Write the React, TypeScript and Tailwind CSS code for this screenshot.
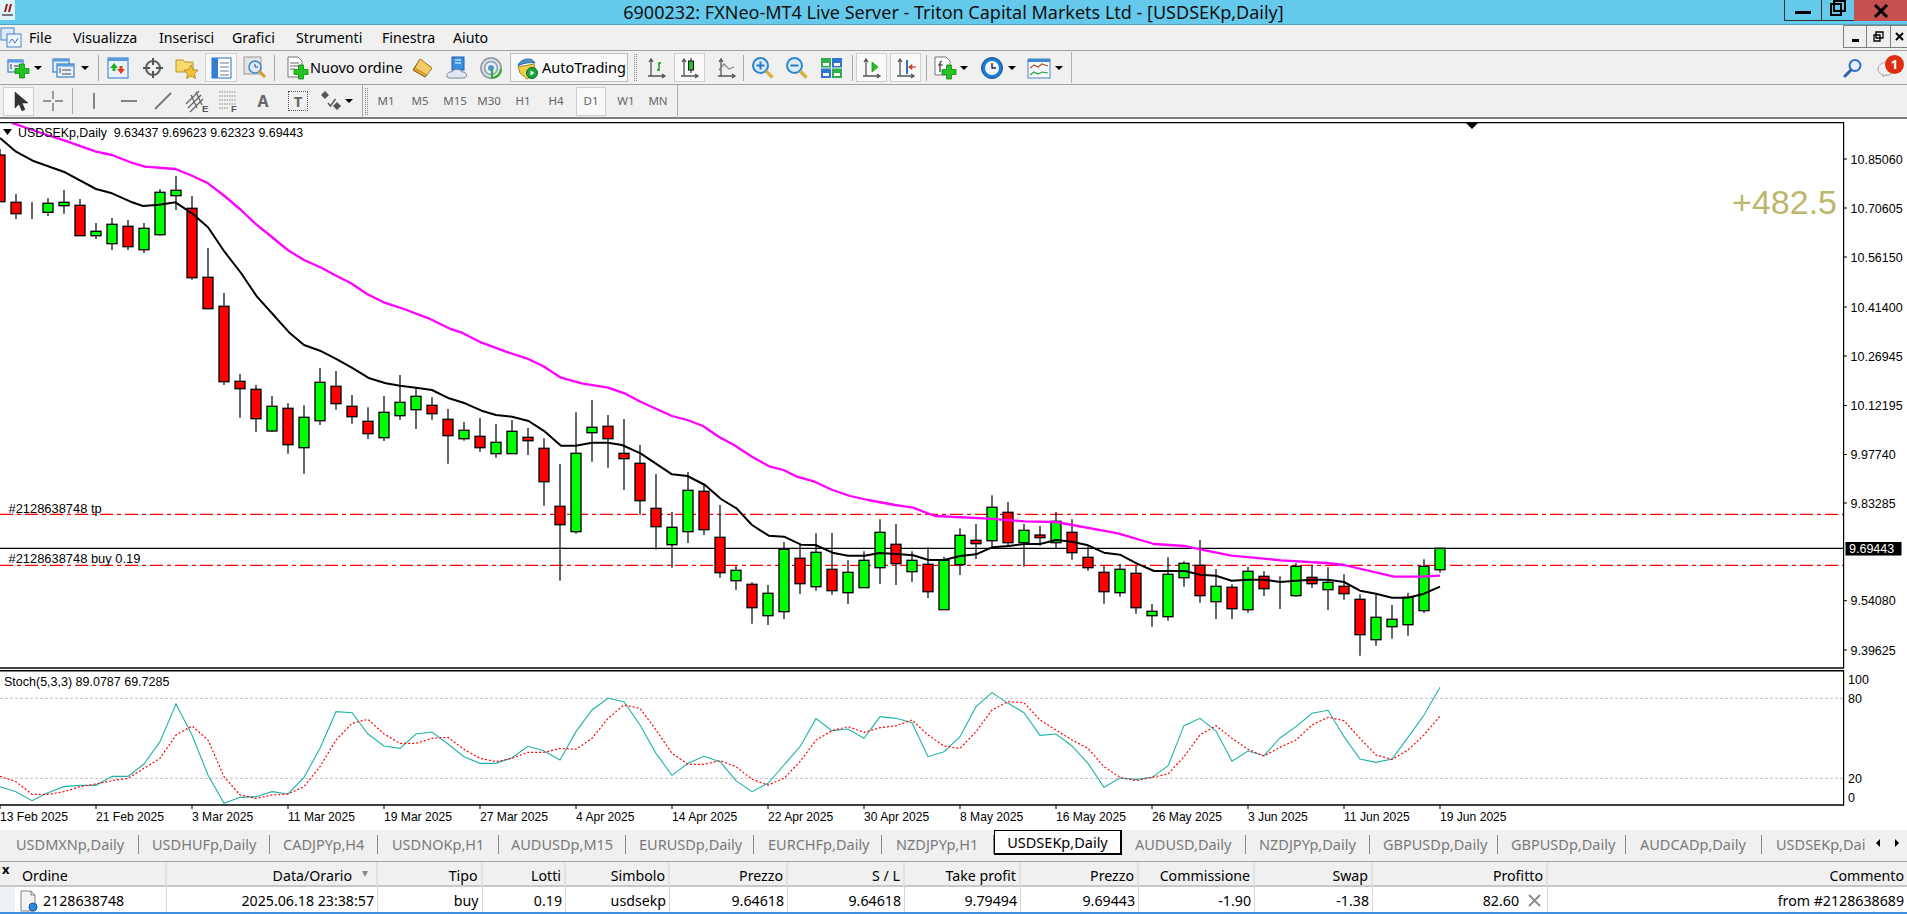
import React from "react";

type C = [number, number, number, number, number];
// top, bottom, high, low, green(1)/red(0)
const CANDLES: C[] = [
[155,201.7,149,202,0],[202.3,213.7,194,219,0],[213.3,213.3,202,219,1],[203.3,212.3,198.3,216,1],[202.3,205.7,190,213.7,1],
[205.3,235.7,199,235.7,0],[231.3,235.7,223,239,1],[224.3,243.7,218,250,1],[226.3,246.7,220,250,0],[228.3,249.7,223,253,1],
[192.3,234.7,189.3,235.7,1],[190.3,195.7,176,210,1],[208.3,277.7,196,279.7,0],[277.3,308.7,248,308.7,0],[306.3,381.7,293,385,0],
[381.3,388.7,374,417.7,0],[389.3,418.7,385,432,0],[406.3,431,396,432,1],[408.3,444.7,403.3,453.7,0],[417.3,447.7,405.3,473.7,1],
[382.3,420.7,368,425,1],[386.3,403.7,371,409.7,0],[406.3,416.7,395,423.7,0],[421.3,433.7,407.3,439,0],[412.3,437.7,396,441,1],
[402.3,415.7,375,419.7,1],[396.3,409.7,388.3,429,1],[405.3,413.7,397.3,419.7,0],[419.3,435.7,409,463.7,0],[430.3,438.7,422,440.7,1],
[436.3,447.7,418,451.7,0],[442.3,453.7,424,457.7,1],[431.3,453.7,420,453.7,1],[437.3,440.7,428,455,0],[448.3,481.7,438.3,505.7,0],
[506.3,524.7,464,580.7,0],[453.3,531.7,412.3,533.7,1],[427.3,432.7,400,461.7,1],[426.3,438.7,415,467.7,0],[453.3,458.7,419,490,0],
[463.3,500.7,445,514.7,0],[508.3,526.7,474,549.7,0],[527.3,544.7,512,567.7,1],[490.3,531.7,472,543,1],[491.3,529.7,484,535,0],
[537.3,572.7,505,577.7,0],[570.3,580.7,565.3,590,1],[584.3,607.7,582.3,623.7,0],[593.3,615.7,585,625,1],[549.3,611.7,542,619,1],
[558.3,583.7,545,594,0],[552.3,586.7,533.3,590.7,1],[569.3,590.7,533,594.7,0],[572.3,592.7,560.3,604,1],[560.3,587.7,551.3,587.7,1],
[532.3,567.7,519.3,584,1],[544.3,563.7,524,585,0],[560.3,571.7,551.3,582,1],[564.3,591.7,547.3,598,0],[560.3,609.7,556.7,609.7,1],
[535.3,564.7,528.3,575,1],[540.3,543.7,524,559,0],[507.3,540.7,495.3,546.7,1],[512.3,542.7,502,546.7,0],[530.3,542.7,524,566.7,1],
[535,537.7,526,545.7,0],[521.3,542.7,512,548.7,1],[532.3,552.7,519.3,559.7,0],[557.3,567.7,546.7,570.7,0],[572.3,591.7,565.7,603.7,0],
[569.3,592.7,564.3,596.7,1],[573.3,607.7,566,613.7,0],[611.3,615.7,604,626.7,1],[574.3,616.7,557.3,620.7,1],[563.3,577.7,561.3,586.7,1],
[565.3,595.7,540,602.7,0],[586.3,601.7,569,619,1],[587.3,608.7,584.3,619,0],[571.3,609.7,567,612.7,1],[576.3,588.7,571.3,596,0],
[592,592,576.3,609,1],[566.3,595.7,563.3,596.7,1],[577.3,583.7,565.3,587.7,0],[582.3,589.7,567.3,610,1],[586.3,593.7,574.3,599.7,0],
[599.3,634.7,594.3,655.7,0],[617.3,639.7,595,645.7,1],[619.3,626.7,605,638.7,1],[597.3,624.7,592.7,635.7,1],[566.3,610.7,559.3,613,1],
[548.3,569.7,548.3,572.7,1],
];

const MAGENTA = "12,123 32.7,130 47,135 65,140.7 96,151.7 112,155 130.6,162.3 145,166.7 175.5,169 192,175.7 208,183.3 224.5,196 241,210 255,223.3 269.4,235 287.8,250 304,260 322.4,268.3 334.7,275 351,283.3 367,294 383.7,302.3 404,309 428.6,318.3 449,328.3 461,332.3 481.6,342.7 506,351.7 526.5,358.3 543,366 561,377.7 581.6,383.3 608,387.7 624.5,393.3 640.5,401.7 672,416 687.4,420 703,426 718.7,436.7 734,445 752,456.7 770,466.7 783.4,470 797,476.7 814.6,481.7 832.5,490 850,496 868,500 895,505 913,507.7 935,516 989,518.7 1024.5,521.3 1056,522 1118,533.3 1154,544 1185,546 1200,549.3 1231.6,555.7 1281,560.3 1326,563 1344,565 1394,576.7 1421,576.7 1440,575.7";
const BLACK = "0,138 16,151.7 32.7,160.7 65,172.3 96,189 112,193.3 130.6,201.7 143,206 159,204.7 175.5,202.3 192,213.3 208,227.3 224.5,251.7 241,273 257,296.7 273.5,315 290,333.3 304,345 320,350.7 337,359.3 353,368.3 369.4,378.3 385.7,383.3 400,385.7 416,387.7 432,390 449,398.3 465,403.3 481.6,410.7 496,415 512,416.7 528.6,421 545,431.7 561,445.7 575.5,445.7 592,442.7 608,442.7 622,445 640.5,453.3 672,474.3 687.4,476 705,485 721,499 736.5,508.3 752,525 768.7,535.7 784,536.7 801,544.7 815.5,545 832.5,552.7 848,555.7 864.6,555.7 879.4,553 897,554 913,555.3 928.5,560 944,560 960,556 976,554.3 992,547.3 1009,546 1024.5,544 1040,544 1056,540 1072,541.7 1088,545.3 1104,552.7 1120,554.7 1136.5,563.3 1154,571 1185,571 1200,574.7 1216,575.7 1231.6,580.7 1248,579.7 1264,579.7 1280,582 1296,580.7 1312,579.7 1328,579.7 1344,582 1360,590.7 1376,593.7 1392,597.7 1408,597.7 1424,593.7 1440,586.7";

const STO = [380,395,422,398,380,376,376,349,349,312,245,132,225,345,430,412,410,395,402,352,265,155,158,222,258,265,222,216,252,290,310,310,293,259,273,300,215,150,115,125,195,280,346,310,289,305,362,395,370,315,260,176,212,207,235,170,175,188,290,275,230,140,98,130,158,226,222,258,310,382,354,358,352,318,197,175,213,304,273,287,234,200,160,151,230,297,307,297,232,165,82];
const SIG = [349,365,403,403,395,380,372,362,355,325,295,225,198,240,350,405,415,405,402,380,320,240,190,178,222,250,250,235,232,268,295,305,295,277,277,265,268,235,175,135,145,210,280,313,313,302,320,358,375,355,305,240,212,200,217,203,197,180,225,258,265,215,150,125,128,180,210,240,265,320,352,362,352,342,290,225,197,235,268,288,262,240,195,172,182,235,285,298,270,225,168];
const toPts = (a: number[]) => a.map((z, i) => `${i * 16},${660 + z / 3}`).join(" ");

const PRICES: [string, number][] = [["10.85060",159],["10.70605",208],["10.56150",257],["10.41400",307],["10.26945",356],["10.12195",405.5],["9.97740",454.5],["9.83285",503],["9.54080",600.7],["9.39625",650]];
const DATES = ["13 Feb 2025","21 Feb 2025","3 Mar 2025","11 Mar 2025","19 Mar 2025","27 Mar 2025","4 Apr 2025","14 Apr 2025","22 Apr 2025","30 Apr 2025","8 May 2025","16 May 2025","26 May 2025","3 Jun 2025","11 Jun 2025","19 Jun 2025"];

function Chart() {
  return (
    <svg viewBox="0 122 1907 708" className="block w-[1907px] h-[708px] bg-white [font-family:'Liberation_Sans',sans-serif]">
      <line x1="0" x2="1843" y1="514.3" y2="514.3" stroke="#ff0000" strokeWidth="1.3" strokeDasharray="13 4 4 4" />
      <line x1="0" x2="1843" y1="565.3" y2="565.3" stroke="#ff0000" strokeWidth="1.3" strokeDasharray="13 4 4 4" />
      <line x1="0" x2="1843" y1="548.3" y2="548.3" stroke="#000" strokeWidth="1.3" />
      {CANDLES.map((c, i) => {
        const x = i * 16;
        return (
          <g key={i}>
            <line x1={x} x2={x} y1={c[2]} y2={c[3]} stroke="#000" strokeWidth="1.2" />
            <rect x={x - 5} y={c[0]} width="10" height={c[1] - c[0]} fill={c[4] ? "#00ff00" : "#ff0000"} stroke="#000" strokeWidth="1.3" />
          </g>
        );
      })}
      <polyline points={MAGENTA} fill="none" stroke="#ff00ff" strokeWidth="2.3" strokeLinejoin="round" />
      <polyline points={BLACK} fill="none" stroke="#000" strokeWidth="2" strokeLinejoin="round" />
      {/* frame */}
      <line x1="0" x2="1844" y1="122.5" y2="122.5" stroke="#000" strokeWidth="1.4" />
      <line x1="0" x2="1844" y1="668" y2="668" stroke="#000" strokeWidth="1.4" />
      <line x1="0" x2="1844" y1="670.8" y2="670.8" stroke="#000" strokeWidth="1.4" />
      <line x1="0" x2="1844" y1="805" y2="805" stroke="#000" strokeWidth="1.4" />
      <line x1="1843.6" x2="1843.6" y1="122" y2="668" stroke="#000" strokeWidth="1.2" />
      <line x1="1843.6" x2="1843.6" y1="670.5" y2="805.5" stroke="#000" strokeWidth="1.2" />
      <polygon points="1466,123 1478,123 1472,129" fill="#000" />
      <polygon points="3,129 12,129 7.5,135" fill="#000" />
      <text x="18" y="137" fontSize="12.4" fill="#000" xmlSpace="preserve">USDSEKp,Daily  9.63437 9.69623 9.62323 9.69443</text>
      <text x="8.5" y="512.5" fontSize="12.9" fill="#000">#2128638748 tp</text>
      <text x="8.5" y="563" fontSize="12.9" fill="#000">#2128638748 buy 0.19</text>
      <text x="1837" y="214" fontSize="34" fill="#bdb76b" textAnchor="end">+482.5</text>
      {PRICES.map(([t, y]) => (
        <g key={t}>
          <line x1="1844" x2="1847" y1={y} y2={y} stroke="#000" strokeWidth="1" />
          <text x="1850.5" y={y + 4.5} fontSize="12.5" fill="#000">{t}</text>
        </g>
      ))}
      <rect x="1845.5" y="542" width="56" height="13.5" fill="#000" />
      <text x="1849" y="553" fontSize="12.5" fill="#fff">9.69443</text>
      {/* stochastic */}
      <line x1="0" x2="1843" y1="698.3" y2="698.3" stroke="#c0c0c0" strokeWidth="1" strokeDasharray="3 2" />
      <line x1="0" x2="1843" y1="778.3" y2="778.3" stroke="#c0c0c0" strokeWidth="1" strokeDasharray="3 2" />
      <polyline points={toPts(STO)} fill="none" stroke="#20b2aa" strokeWidth="1.1" />
      <polyline points={toPts(SIG)} fill="none" stroke="#ff0000" strokeWidth="1.2" strokeDasharray="2 2" />
      <text x="4" y="686" fontSize="12.5" fill="#000">Stoch(5,3,3) 89.0787 69.7285</text>
      {[["100",679.5],["80",698.5],["20",778.5],["0",797.5]].map(([t, y]) => (
        <g key={t as string}>
          <text x="1848" y={(y as number) + 4.5} fontSize="12.5" fill="#000">{t}</text>
        </g>
      ))}
      {DATES.map((d, i) => (
        <g key={d}>
          <line x1={i * 96} x2={i * 96} y1="805" y2="809" stroke="#000" strokeWidth="1" />
          <text x={i * 96} y="821" fontSize="12.1" fill="#000">{d}</text>
        </g>
      ))}
    </svg>
  );
}

const Ico = ({ children, w = 24, h = 24 }: { children: React.ReactNode; w?: number; h?: number }) => (
  <svg width={w} height={h} viewBox={`0 0 ${w} ${h}`} className="block shrink-0">{children}</svg>
);
const Plus = ({ x, y, s = 1 }: { x: number; y: number; s?: number }) => (
  <path transform={`translate(${x} ${y}) scale(${s})`} d="M-2.5-7h5v4.5H7v5H2.5V7h-5V2.5H-7v-5h4.5z" fill="#22c322" stroke="#0d8a0d" strokeWidth=".8" />
);
const Win = ({ x, y, w, h }: { x: number; y: number; w: number; h: number }) => (
  <g>
    <rect x={x} y={y} width={w} height={h} fill="#e8f1fb" stroke="#3f7fc4" strokeWidth="1.2" />
    <rect x={x} y={y} width={w} height="2.5" fill="#5a9ae0" />
  </g>
);
const Tri = () => <div className="w-0 h-0 border-l-[4px] border-r-[4px] border-t-[4px] border-l-transparent border-r-transparent border-t-black" />;
const Slot = ({ c, children }: { c: string; children?: React.ReactNode }) => (
  <div className={`flex items-center justify-center h-full shrink-0 ${c}`}>{children}</div>
);
const Sep = ({ c }: { c: string }) => <div className={`w-px h-[26px] bg-[#a8a8a8] shrink-0 ${c}`} />;
const Active = ({ c, children }: { c: string; children?: React.ReactNode }) => (
  <div className={`flex items-center justify-center h-[29px] shrink-0 bg-[#f9f9f9] border border-[#cfcfcf] ${c}`}>{children}</div>
);
const Grip = ({ c }: { c: string }) => <div className={`w-[3px] h-[27px] shrink-0 border-x border-dotted border-[#8a8a8a] ${c}`} />;

const Axes = () => (
  <g stroke="#555" strokeWidth="1.3" fill="none">
    <path d="M6 3v17M19 20H3M4 6l2-3 2 3M17 18l3 2-3 2" />
  </g>
);

function Toolbar1() {
  return (
    <div className="flex items-center h-[34px] border-b border-[#a0a0a0] pl-[8px] bg-[#f0f0f0]">
      <Slot c="w-[22px]"><Ico><Win x={1} y={4} w={15} h={12} /><path d="M4 8v5M7 10h6" stroke="#333" strokeWidth="1" /><Plus x={15} y={15} /></Ico></Slot>
      <Slot c="w-[16px]"><Tri /></Slot>
      <Slot c="w-[28px] ml-[4px]"><Ico><Win x={1} y={3} w={16} h={13} /><Win x={5} y={8} w={17} h={13} /><path d="M8 12v5M10 14h9M10 18h9" stroke="#333" strokeWidth=".9" /></Ico></Slot>
      <Slot c="w-[14px]"><Tri /></Slot>
      <Sep c="ml-[6px]" />
      <Slot c="w-[38px]"><Ico><rect x="2" y="2" width="20" height="20" fill="#eaf2fb" stroke="#4a8ad0" strokeWidth="1.2" /><rect x="2" y="2" width="20" height="3" fill="#5a9ae0" /><path d="M8 7l-4 5h2.5v3h3v-3H12z" fill="#20b020" /><path d="M15 18l4-5h-2.5v-3h-3v3H11z" fill="#e0401c" /></Ico></Slot>
      <Slot c="w-[32px]"><Ico><circle cx="12" cy="12" r="7" fill="none" stroke="#666" strokeWidth="2.2" /><path d="M12 2v7M12 15v7M2 12h7M15 12h7" stroke="#555" strokeWidth="2" /></Ico></Slot>
      <Slot c="w-[36px]"><Ico><path d="M1 4h7l2 2h8v10H1z" fill="#f7d96b" stroke="#b8942e" /><path d="M16 9l2.2 4.6 5 .6-3.7 3.4 1 5-4.5-2.5-4.5 2.5 1-5-3.7-3.4 5-.6z" fill="#f2c230" stroke="#a5832a" strokeWidth=".8" /></Ico></Slot>
      <Active c="w-[32px]"><Ico><rect x="3" y="2" width="19" height="20" fill="#fff" stroke="#4a8ad0" strokeWidth="1.2" /><rect x="3" y="2" width="6" height="20" fill="#2f80d8" /><path d="M11 7h9M11 11h9M11 15h9M11 19h9" stroke="#6a7a90" strokeWidth="1.1" /><path d="M7 6v1M7 10v1" stroke="#e03a20" strokeWidth="1.4" /></Ico></Active>
      <Slot c="w-[36px]"><Ico><rect x="1" y="1" width="17" height="17" fill="#e3e3e3" stroke="#999" /><circle cx="12" cy="11" r="6" fill="#d9ebfa" stroke="#3f86c8" strokeWidth="1.5" /><path d="M16 15l6 6" stroke="#c9a030" strokeWidth="3" /><path d="M12 8v3h3" stroke="#445" fill="none" /></Ico></Slot>
      <Sep c="ml-px" />
      <div className="w-[35px] h-full flex items-center pl-[10px] shrink-0 overflow-visible">
        <Ico><path d="M3 1h10l4 4v16H3z" fill="#fff" stroke="#777" /><path d="M5 7h9M5 10h9M5 13h5" stroke="#666" /><Plus x={16} y={16} /></Ico>
      </div>
      <div className="w-[91px] shrink-0 text-[14.5px] text-black whitespace-nowrap">Nuovo ordine</div>
      <Slot c="w-[44px]"><Ico><path d="M9 3l12 9-7 9-12-7z" fill="#e4a92e" stroke="#7a5a10" /><path d="M9 3L4 12l12 7 5-7z" fill="#f4cd6a" stroke="#9a7414" strokeWidth=".6" /></Ico></Slot>
      <Slot c="w-[24px]"><Ico><rect x="7" y="1" width="12" height="13" fill="#3a90e0" stroke="#1f5fa8" /><path d="M10 4h6M10 7h6" stroke="#fff" /><path d="M2 21c-1-4 3-6 5-5 2-4 9-3 10 0 4-1 7 5 2 6H4z" fill="#dfe8f2" stroke="#7a8a9a" /></Ico></Slot>
      <Slot c="w-[32px] ml-[6px]"><Ico><circle cx="12" cy="12" r="10" fill="none" stroke="#9aa3aa" strokeWidth="2" /><circle cx="12" cy="12" r="6.5" fill="none" stroke="#8fa8bc" strokeWidth="2" /><circle cx="12" cy="12" r="3" fill="#4a9ad0" /><path d="M13 13v9a9 9 0 0 0 9-9" fill="none" stroke="#3aaa3a" strokeWidth="2.2" /></Ico></Slot>
      <div className="flex items-center w-[118px] h-[29px] ml-[3px] shrink-0 bg-[#f9f9f9] border border-[#bdbdbd] pl-[4px] gap-[3px] text-[14.5px] text-black whitespace-nowrap">
        <Ico><path d="M3 11l16-3 2 10-9 5-7-6z" fill="#f0cf4e" stroke="#a3882a" /><path d="M3 10C4 3 17 0 20 7c-6-1-12 0-17 3z" fill="#4a94cc" stroke="#2a6a9a" /><circle cx="17" cy="17" r="5.5" fill="#18a838" stroke="#0a6a20" /><path d="M15.5 14.5l4 2.5-4 2.5z" fill="#fff" /></Ico>
        <span>AutoTrading</span>
      </div>
      <Grip c="ml-[6px]" />
      <Slot c="w-[34px] ml-[3px]"><Ico><Axes /><path d="M14 6v9M12 14h2M14 7h2" stroke="#1a9a1a" strokeWidth="1.5" fill="none" /></Ico></Slot>
      <Active c="w-[31px]"><Ico><Axes /><path d="M13 2v15" stroke="#111" /><rect x="10.5" y="5" width="5" height="9" fill="#22c322" stroke="#111" /></Ico></Active>
      <Slot c="w-[26px] ml-[9px]"><Ico><Axes /><path d="M4 14l5-6 5 5 5-2" fill="none" stroke="#888" strokeWidth="1.3" /></Ico></Slot>
      <Sep c="ml-[3px]" />
      <Slot c="w-[38px]"><Ico><circle cx="9.5" cy="9.5" r="7.5" fill="#d9ecfb" stroke="#2f86cc" strokeWidth="2" /><path d="M9.5 5.5v8M5.5 9.5h8" stroke="#2f76c0" strokeWidth="2" /><path d="M15 15l6.5 6.5" stroke="#d9b040" strokeWidth="3.4" /></Ico></Slot>
      <Slot c="w-[30px]"><Ico><circle cx="9.5" cy="9.5" r="7.5" fill="#d9ecfb" stroke="#2f86cc" strokeWidth="2" /><path d="M5.5 9.5h8" stroke="#2f76c0" strokeWidth="2" /><path d="M15 15l6.5 6.5" stroke="#d9b040" strokeWidth="3.4" /></Ico></Slot>
      <Slot c="w-[40px]"><Ico><rect x="1" y="2" width="10" height="9.5" fill="#2fae4a" /><rect x="12" y="2" width="10" height="9.5" fill="#2f74d0" /><rect x="1" y="12.5" width="10" height="9.5" fill="#2f74d0" /><rect x="12" y="12.5" width="10" height="9.5" fill="#2fae4a" /><path d="M3 7h6v3H3zM14 7h6v3h-6zM3 17h6v3H3zM14 17h6v3h-6z" fill="#fff" /></Ico></Slot>
      <Sep c="" />
      <Active c="w-[31px] ml-[3px]"><Ico><Axes /><path d="M12 6l6 5-6 5z" fill="#22c322" stroke="#0d8a0d" strokeWidth=".7" /></Ico></Active>
      <Active c="w-[31px] ml-[3px]"><Ico><Axes /><path d="M13 4v14" stroke="#2060c0" strokeWidth="1.8" /><path d="M22 11h-4V8.5L14.5 11l3.5 2.5V11z" fill="#e04a20" stroke="#b02a10" strokeWidth=".6" /></Ico></Active>
      <Sep c="ml-[5px]" />
      <Slot c="w-[30px] ml-[3px]"><Ico><path d="M2 1h11l4 4v14H2z" fill="#fff" stroke="#777" /><path d="M9 5c-2 0-2 2-2 3v8M5 9h5" stroke="#333" strokeWidth="1.2" fill="none" /><Plus x={16} y={16} /></Ico></Slot>
      <Slot c="w-[8px]"><Tri /></Slot>
      <Slot c="w-[32px] ml-[8px]"><Ico><circle cx="12" cy="12" r="10.5" fill="#1f7cd0" stroke="#0e4e90" /><circle cx="12" cy="12" r="7" fill="#f4f7fa" /><path d="M12 7v5h4" stroke="#222" strokeWidth="1.4" fill="none" /></Ico></Slot>
      <Slot c="w-[8px]"><Tri /></Slot>
      <Slot c="w-[32px] ml-[7px]"><Ico><rect x="1" y="3" width="22" height="19" fill="#f5fafe" stroke="#4a86c4" /><rect x="1" y="3" width="22" height="3" fill="#3f86d0" /><path d="M3 12l4-3 4 2 4-3 6 2" stroke="#b0502a" fill="none" strokeWidth="1.2" /><path d="M3 19l4-3 4 2 4-2 6 1" stroke="#2aa03a" fill="none" strokeWidth="1.2" /></Ico></Slot>
      <Slot c="w-[8px]"><Tri /></Slot>
      <div className="w-px h-[31px] bg-[#b0b0b0] ml-[8px] shrink-0" />
      <div className="flex items-center h-full ml-auto pr-[5px] shrink-0">
        <Slot c="w-[22px]"><Ico w={20} h={20}><circle cx="12" cy="7.5" r="5.5" fill="#e7f1fb" stroke="#2c6fc0" strokeWidth="2" /><path d="M8 12l-6 6" stroke="#2c5fb0" strokeWidth="3" strokeLinecap="round" /></Ico></Slot>
        <div className="relative w-[32px] h-full ml-[6px] flex items-center justify-center">
          <Ico w={18} h={18}><ellipse cx="9" cy="10" rx="8" ry="6.5" fill="#f0f0f0" stroke="#a8a8a8" /><path d="M6 15v3l4-3" fill="#e8e8e8" stroke="#a8a8a8" /></Ico>
          <div className="absolute right-[-2px] top-[4px] w-[19px] h-[19px] rounded-full bg-[#dd2e14] text-white text-[13px] font-bold leading-[19px] text-center">1</div>
        </div>
      </div>
    </div>
  );
}

const Tf = ({ c, t }: { c: string; t: string }) => (
  <div className={`flex items-center justify-center h-full shrink-0 text-[11.5px] text-[#666] ${c}`}>{t}</div>
);

function Toolbar2() {
  return (
    <div className="flex items-center h-[34px] border-b-2 border-[#7f7f7f] pl-[3px] bg-[#f0f0f0]">
      <Active c="w-[31px]"><Ico><path d="M8 3v16l4-4 3 7 3-1.5-3-6.5h6z" fill="#333" stroke="#222" strokeWidth=".5" /></Ico></Active>
      <Slot c="w-[38px]"><Ico><path d="M12 2v8M12 14v8M2 12h8M14 12h8" stroke="#777" strokeWidth="1.4" /></Ico></Slot>
      <Sep c="" />
      <Slot c="w-[41px]"><Ico><path d="M12 4v16" stroke="#777" strokeWidth="1.8" /></Ico></Slot>
      <Slot c="w-[29px]"><Ico><path d="M4 12h16" stroke="#777" strokeWidth="1.8" /></Ico></Slot>
      <Slot c="w-[40px]"><Ico><path d="M4 20L20 4" stroke="#777" strokeWidth="1.8" /></Ico></Slot>
      <Slot c="w-[30px]"><svg width="26" height="24" viewBox="0 0 26 24" className="block"><path d="M1 15L14 2M3 19L16 6M5 23L18 10M6 6l6 13M11 3l6 13" stroke="#666" strokeWidth="1.3" /><text x="17" y="22.5" fontSize="9.5" fontWeight="700" fill="#555" className="[font-family:'Liberation_Sans',sans-serif]">E</text></svg></Slot>
      <Slot c="w-[32px]"><svg width="24" height="24" viewBox="0 0 24 24" className="block"><path d="M2 3h17M2 7h17M2 11h17M2 15h17M2 19h9" stroke="#888" strokeDasharray="1.5 1" /><text x="14" y="23" fontSize="9.5" fontWeight="700" fill="#555" className="[font-family:'Liberation_Sans',sans-serif]">F</text></svg></Slot>
      <Slot c="w-[36px] text-[16px] font-bold text-[#666]">A</Slot>
      <Slot c="w-[34px]"><div className="flex items-center justify-center w-[20px] h-[20px] border border-dotted border-[#555] text-[15px] font-bold text-[#666]">T</div></Slot>
      <Slot c="w-[28px] ml-[2px]"><Ico><path d="M6 2l4 4-4 4-4-4zM18 13l4 4-4 4-4-4z" fill="#555" /><path d="M9 14l2.5 3 5-7" stroke="#555" strokeWidth="1.4" fill="none" /></Ico></Slot>
      <Slot c="w-[8px]"><Tri /></Slot>
      <Sep c="ml-[9px] !h-[33px]" />
      <Grip c="ml-[2px]" />
      <Tf c="w-[34px] ml-[1px]" t="M1" />
      <Tf c="w-[34px]" t="M5" />
      <Tf c="w-[36px]" t="M15" />
      <Tf c="w-[32px]" t="M30" />
      <Tf c="w-[36px]" t="H1" />
      <Tf c="w-[30px]" t="H4" />
      <Active c="w-[30px] ml-[5px] text-[11.5px] text-[#666]">D1</Active>
      <Tf c="w-[40px]" t="W1" />
      <Tf c="w-[24px]" t="MN" />
      <div className="w-px h-[33px] bg-[#b0b0b0] ml-[7px] shrink-0" />
    </div>
  );
}

const TABS: [string, string][] = [
  ["USDMXNp,Daily","w-[139px] pl-[16px]"],["USDHUFp,Daily","w-[131px] pl-[13px]"],["CADJPYp,H4","w-[108px] pl-[13px]"],["USDNOKp,H1","w-[121px] pl-[14px]"],
  ["AUDUSDp,M15","w-[127px] pl-[12px]"],["EURUSDp,Daily","w-[128px] pl-[13px]"],["EURCHFp,Daily","w-[128px] pl-[14px]"],["NZDJPYp,H1","w-[112px] pl-[14px]"],
];
const TABS2: [string, string][] = [
  ["AUDUSD,Daily","w-[124px] pl-[13px]"],["NZDJPYp,Daily","w-[124px] pl-[13px]"],["GBPUSDp,Daily","w-[128px] pl-[13px]"],["GBPUSDp,Daily","w-[128px] pl-[13px]"],["AUDCADp,Daily","w-[136px] pl-[14px]"],
];
const Tab = ({ t, c }: { t: string; c: string }) => (
  <div className={`h-[19px] mt-[3px] border-r border-[#8a8a8a] shrink-0 overflow-hidden whitespace-nowrap text-[14.5px] leading-[19px] text-[#7a7a7a] ${c}`}>{t}</div>
);

function Tabs() {
  return (
    <div className="flex items-center h-[25px] bg-[#f0f0f0]">
      {TABS.map(([t, c], i) => <Tab key={i} t={t} c={c} />)}
      <div className="flex items-center justify-center w-[128px] h-[25px] pt-[2px] shrink-0 bg-white border-l border-t border-black border-r-2 border-b-2 text-[14.5px] text-black">USDSEKp,Daily</div>
      {TABS2.map(([t, c], i) => <Tab key={i} t={t} c={c} />)}
      <div className="w-[104px] mt-[3px] pl-[14px] shrink-0 overflow-hidden whitespace-nowrap text-[14.5px] leading-[19px] text-[#7a7a7a]">USDSEKp,Daily</div>
      <div className="flex items-center shrink-0 pl-[10px] gap-[15px]">
        <div className="w-0 h-0 border-y-[4px] border-r-[4px] border-y-transparent border-r-black" />
        <div className="w-0 h-0 border-y-[4px] border-l-[4px] border-y-transparent border-l-black" />
      </div>
    </div>
  );
}

const GRID = "grid grid-cols-[15px_152px_211px_104.5px_83.5px_104px_118px_117px_116px_118px_116px_118px_175px_359px]";
const HEAD = ["Ordine","Data/Orario","Tipo","Lotti","Simbolo","Prezzo","S / L","Take profit","Prezzo","Commissione","Swap","Profitto","Commento"];
const ROW = ["2025.06.18 23:38:57","buy","0.19","usdsekp","9.64618","9.64618","9.79494","9.69443","-1.90","-1.38"];

function Terminal() {
  return (
    <div className="flex flex-col border-t border-[#a0a0a0] mt-[6px] text-[14.2px] text-black">
      <div className={`${GRID} h-[25px] bg-[#f0f0f0] border-b-2 border-[#c8c8c8]`}>
        <div className="text-[13px] leading-[14px] pl-[2px] font-bold">x</div>
        {HEAD.map((h, i) => (
          <div key={i} className={`flex items-center pt-[3px] border-r-2 border-[#e2e2e2] ${i === 0 ? "pl-[7px]" : "justify-end pr-[3px]"} ${i === 1 ? "!pr-[24px] relative" : ""} ${i === 12 ? "!border-r-0 !pr-[3px]" : ""}`}>
            {h}
            {i === 1 && <span className="absolute right-[8px] top-[9px] w-0 h-0 border-x-[3px] border-t-[6px] border-x-transparent border-t-[#888]" />}
          </div>
        ))}
      </div>
      <div className={`${GRID} h-[27px] bg-white border-b-2 border-[#3d8fe0]`}>
        <div className="bg-[#eef2f7]" />
        <div className="flex items-center pt-[2px] border-r border-[#d8d8d8] pl-[4px] gap-[4px]">
          <Ico w={20} h={22}><path d="M2 1h10l4 4v16H2z" fill="#f4f4f4" stroke="#7a8088" /><path d="M12 1v4h4" fill="none" stroke="#7a8088" /><circle cx="14" cy="17" r="4" fill="#2f8ae0" stroke="#1a5aa0" /></Ico>
          <span>2128638748</span>
        </div>
        {ROW.map((v, i) => (
          <div key={i} className="flex items-center pt-[2px] justify-end border-r border-[#d8d8d8] pr-[3px]">{v}</div>
        ))}
        <div className="flex items-center pt-[2px] justify-end border-r border-[#d8d8d8] pr-[6px] gap-[9px]">
          <span>82.60</span>
          <svg width="13" height="13" viewBox="0 0 13 13" className="block"><path d="M1 1l11 11M12 1L1 12" stroke="#8a8a8a" strokeWidth="1.8" /></svg>
        </div>
        <div className="flex items-center pt-[2px] justify-end pr-[3px]">from #2128638689</div>
      </div>
    </div>
  );
}

const MENUS: [string, string][] = [["File","w-[44px]"],["Visualizza","w-[86px]"],["Inserisci","w-[73px]"],["Grafici","w-[64px]"],["Strumenti","w-[86px]"],["Finestra","w-[71px]"],["Aiuto","w-[50px]"]];

export default function App() {
  return (
    <div className="flex flex-col w-[1907px] h-[914px] overflow-hidden bg-[#f0f0f0] [font-family:'Noto_Sans',sans-serif]">
      {/* title bar */}
      <div className="grid grid-cols-[1fr_auto_1fr] h-[25px] bg-[#65c9eb] border-b border-[#5b9fba]">
        <div className="flex items-start">
          <div className="flex items-center justify-center w-[15px] h-[20px] bg-white/80">
            <svg width="13" height="16" viewBox="0 0 13 16"><path d="M3 10l2-8h2L5 10zM7 10l2-8h2L9 10z" fill="#a01818" /><rect x="1" y="12" width="11" height="2" fill="#777" /></svg>
          </div>
        </div>
        <div className="text-[18px] leading-[24px] text-[#111] whitespace-nowrap">6900232: FXNeo-MT4 Live Server - Triton Capital Markets Ltd - [USDSEKp,Daily]</div>
        <div className="flex justify-end items-start">
          <div className="flex items-end justify-center w-[37px] h-[21px] border-l border-b border-[#333] pb-[6px]"><div className="w-[16px] h-[3px] bg-black" /></div>
          <div className="flex items-start justify-center w-[33px] h-[21px] border-l border-b border-[#333]"><svg width="16" height="16" viewBox="0 0 16 16"><path d="M4 1h11v10H4z M1 4h10v11H1z" fill="none" stroke="#000" strokeWidth="2" /></svg></div>
          <div className="flex items-center justify-center w-[53px] h-[21px] bg-[#c75050]"><svg width="16" height="14" viewBox="0 0 16 14"><path d="M2 1l12 12M14 1L2 13" stroke="#000" strokeWidth="3" /></svg></div>
        </div>
      </div>
      {/* menu */}
      <div className="flex items-center h-[26px] bg-[#f0f0f0] border-b border-[#a0a0a0] text-[14.2px] text-black">
        <div className="w-[29px] h-full flex items-center shrink-0">
          <Ico w={22} h={22}><rect x="1" y="1" width="13" height="12" fill="#dceafa" stroke="#4a80c0" /><rect x="7" y="7" width="14" height="13" fill="#eef5fd" stroke="#4a80c0" /><path d="M9 16l3-4 3 4 3-5" stroke="#3f6fb0" fill="none" /></Ico>
        </div>
        {MENUS.map(([t, c]) => <div key={t} className={`shrink-0 ${c}`}>{t}</div>)}
        <div className="flex ml-auto self-start h-[23px] shrink-0">
          <div className="flex items-end justify-center w-[24px] border border-[#808080] pb-[5px]"><div className="w-[7px] h-[3px] bg-black" /></div>
          <div className="flex items-center justify-center w-[24px] border-y border-r border-[#808080]"><svg width="11" height="11" viewBox="0 0 11 11"><path d="M3 1h7v6H3zM1 4h6v6H1z" fill="none" stroke="#000" strokeWidth="1.3" /></svg></div>
          <div className="flex items-center justify-center w-[16px] border-y border-l-0 border-[#808080]"><svg width="9" height="9" viewBox="0 0 9 9"><path d="M1 1l7 7M8 1L1 8" stroke="#000" strokeWidth="2" /></svg></div>
        </div>
      </div>
      <Toolbar1 />
      <Toolbar2 />
      <div className="h-[3px] bg-white shrink-0" />
      <Chart />
      <Tabs />
      <Terminal />
    </div>
  );
}
